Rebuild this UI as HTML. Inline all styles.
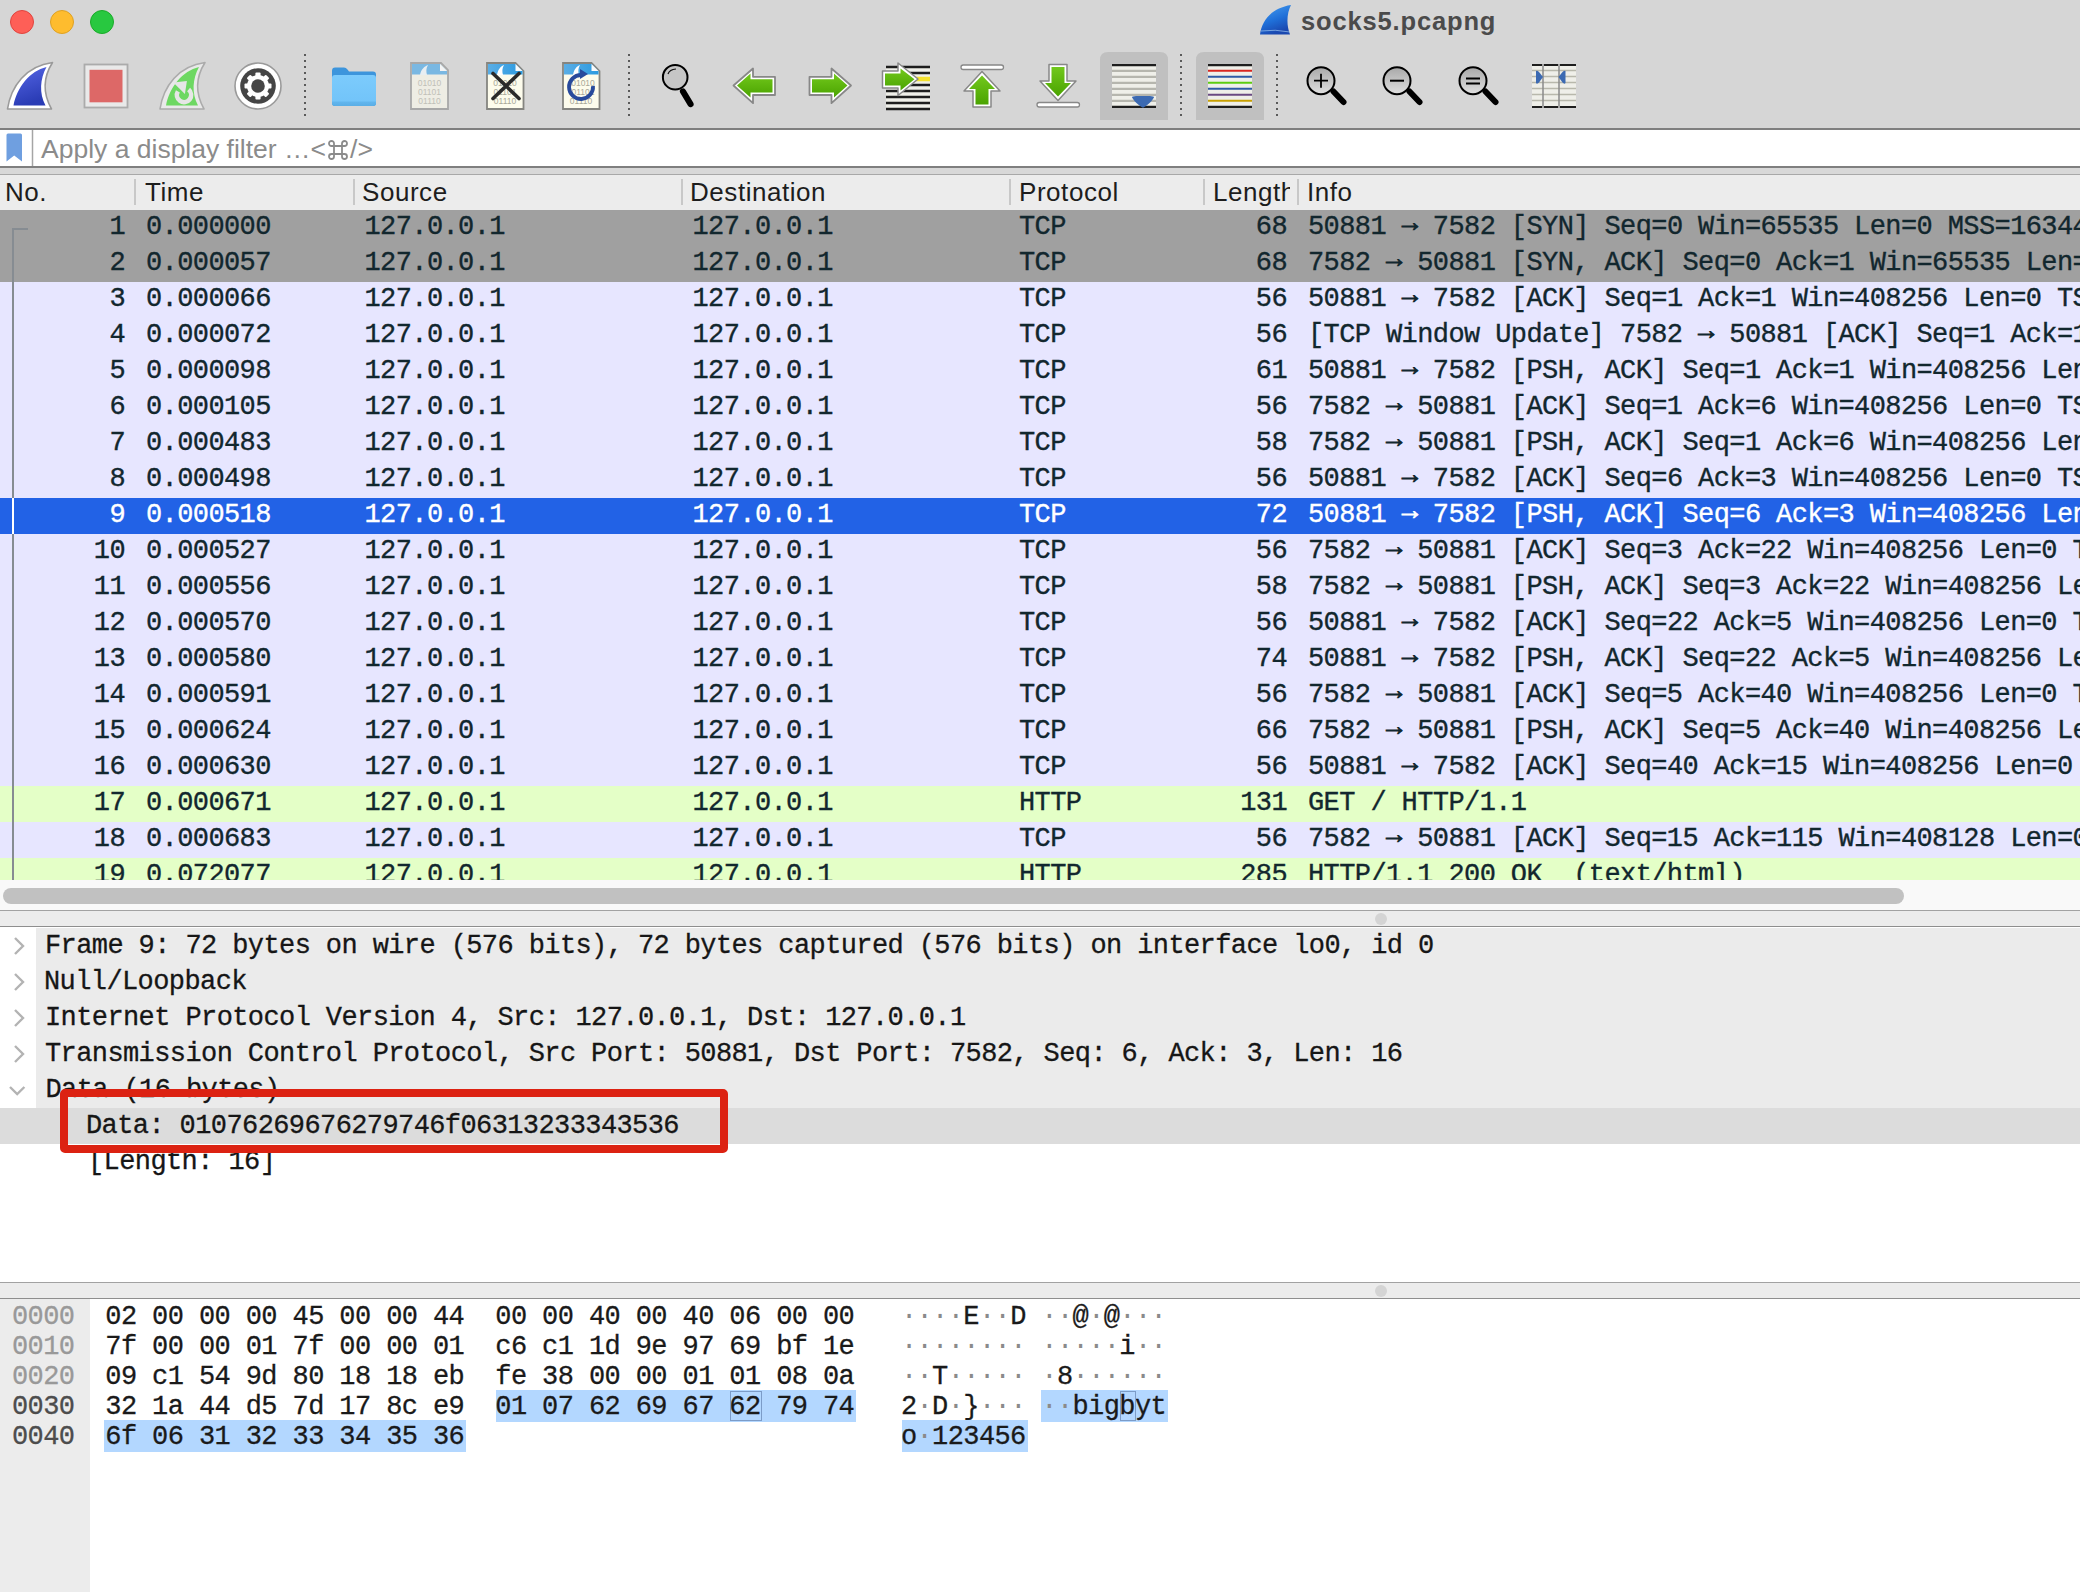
<!DOCTYPE html>
<html><head><meta charset="utf-8">
<style>
*{margin:0;padding:0;box-sizing:border-box}
html,body{width:2080px;height:1592px;overflow:hidden;background:#fff;font-family:"Liberation Sans",sans-serif}
.a{position:absolute}
#top{left:0;top:0;width:2080px;height:128px;background:#d6d6d6}
.tl{width:24px;height:24px;border-radius:50%;top:10px}
#title{left:1301px;top:6.7px;font:bold 25.5px "Liberation Sans",sans-serif;color:#4b4b4b;letter-spacing:0.85px}
.sep{width:3px;top:54px;height:62px;background-image:linear-gradient(#555 50%,transparent 50%);background-size:3px 6px;opacity:.75}
#filter{left:0;top:128px;width:2080px;height:40px;background:#fff;border-top:2px solid #7f7f7f;border-bottom:2px solid #7f7f7f}
#ftext{left:41px;top:134px;font-size:26.5px;color:#8b8b8b;white-space:pre}
#band1{left:0;top:168px;width:2080px;height:7px;background:#d8d8d8;border-bottom:1px solid #a8a8a8}
#hdr{left:0;top:175px;width:2080px;height:35px;background:#ececec}
.hl{top:177px;font-size:26px;letter-spacing:0.55px;color:#1d1d1d;white-space:pre;overflow:hidden}
.hs{top:179px;width:2px;height:26px;background:#c8c8c8}
#list{left:0;top:210px;width:2080px;height:670px;overflow:hidden;background:#fff}
.r{position:absolute;left:0;width:2080px;height:36px;color:#12272e;font-family:"Liberation Mono",monospace;font-size:27px;letter-spacing:-0.6px;white-space:pre;-webkit-text-stroke:0.35px currentColor}
.r span{position:absolute;top:2px}
.ar{font-style:normal;position:relative;top:-2.8px;-webkit-text-stroke:0.9px currentColor}
.syn{background:#a0a0a0}.tcp{background:#e7e6ff}.hgr{background:#e4ffc7}.sel{background:#2262e6;color:#fff}

#sb{left:0;top:880px;width:2080px;height:30px;background:#f9f9f9}
#thumb{left:3px;top:888px;width:1901px;height:16px;border-radius:8px;background:#c1c1c1}
.split{left:0;width:2080px;height:17px;background:#ececec;border-top:1px solid #a2a2a2;border-bottom:1px solid #8e8e8e}
.dot{width:12px;height:12px;border-radius:50%;background:#d4d4d4}
#det{left:0;top:928px;width:2080px;height:354px;background:#fff;overflow:hidden}
.d{position:absolute;left:0;width:2080px;height:36px;color:#161616;font-family:"Liberation Mono",monospace;font-size:27px;letter-spacing:-0.6px;white-space:pre;-webkit-text-stroke:0.3px currentColor}
.d span{position:absolute;top:3px}
.dg{background:#ebebeb}
.dg::before{content:"";position:absolute;left:0;top:0;width:36px;height:36px;background:#fff}
.dsel{background:#dcdcdc}
.chev{position:absolute;left:12px;top:8px}
#hex{left:0;top:1299px;width:2080px;height:293px;background:#fff}
#offc{left:0;top:1299px;width:90px;height:293px;background:#ececec}
.h{position:absolute;height:30px;font-family:"Liberation Mono",monospace;font-size:27px;letter-spacing:-0.6px;white-space:pre;color:#1a1a1a;-webkit-text-stroke:0.3px currentColor}
.hb{position:absolute;background:#b3d7ff;height:32px}
#redbox{left:60px;top:1089px;width:668px;height:64px;border:8px solid #dc2212;border-radius:5px}
</style></head><body>
<div class="a" id="top"></div>
<div class="a tl" style="left:10px;background:#fe5f57;border:1px solid #e0443e"></div>
<div class="a tl" style="left:50px;background:#febc2e;border:1px solid #dea123"></div>
<div class="a tl" style="left:90px;background:#28c840;border:1px solid #1aab29"></div>
<svg class="a" style="left:0;top:0" width="1600" height="128" viewBox="0 0 1600 128">
<defs>
<linearGradient id="gBlue" x1="0" y1="0" x2="0.3" y2="1"><stop offset="0" stop-color="#5566e6"/><stop offset="1" stop-color="#2a3cb5"/></linearGradient>
<linearGradient id="gGreen" x1="0" y1="0" x2="0" y2="1"><stop offset="0" stop-color="#72c81c"/><stop offset="1" stop-color="#4aa300"/></linearGradient>
<linearGradient id="gMag" x1="0" y1="0" x2="0" y2="1"><stop offset="0" stop-color="#a8a8a8"/><stop offset="1" stop-color="#e0e0e0"/></linearGradient>
<linearGradient id="gFolder" x1="0" y1="0" x2="0" y2="1"><stop offset="0" stop-color="#7ccbfc"/><stop offset="0.85" stop-color="#72c4f9"/><stop offset="0.86" stop-color="#62b6ee"/><stop offset="1" stop-color="#5aaee6"/></linearGradient>
<linearGradient id="gFileTop" x1="0" y1="0" x2="1" y2="0"><stop offset="0" stop-color="#5aaee6"/><stop offset="1" stop-color="#2b9ae0"/></linearGradient>
<g id="fin">
 <path d="M7.5,109 C11,86 26,66 52.5,62.5 C44,76 42,92 51.5,109 Z" fill="#fff" stroke="#9a9a9a" stroke-width="1.6" stroke-linejoin="round"/>
</g>
<g id="dots"><path d="M0,54 V117" stroke="#5a5a5a" stroke-width="2" stroke-dasharray="2 4"/></g>
<g id="lines">
 <rect x="0" y="0" width="44" height="44" fill="#efefe9"/>
</g>
</defs>
<!-- start capture fin -->
<use href="#fin"/>
<path d="M13.5,105.5 C17,87 30,71 46.5,67 C40,79 39,93 45.5,105.5 Z" fill="url(#gBlue)"/>
<!-- stop -->
<rect x="84.5" y="64.5" width="43" height="43" fill="#e9e9e9" stroke="#ababab" stroke-width="1.8"/>
<rect x="89.5" y="69.8" width="33" height="32.5" fill="#dd6867"/>
<!-- restart fin -->
<path d="M7.5,109 C11,86 26,66 52.5,62.5 C44,76 42,92 51.5,109 Z" transform="translate(152.5,0)" fill="#e9e9e9" stroke="#ababab" stroke-width="1.6" stroke-linejoin="round"/>
<path d="M13.5,105.5 C17,87 30,71 46.5,67 C40,79 39,93 45.5,105.5 Z" transform="translate(152.5,0)" fill="#6dd862"/>
<path d="M188.6,89.6 A7.1,7.1 0 1 1 177.9,91.4" fill="none" stroke="#e6e6e6" stroke-width="4.6"/>
<path d="M173.3,82.6 L186.9,81.1 L184.9,93.9 Z" fill="#e6e6e6"/>
<!-- options gear -->
<circle cx="258" cy="86" r="23" fill="#fff" stroke="#9a9a9a" stroke-width="1.6"/>
<circle cx="258" cy="86" r="17.8" fill="#454545"/>
<g fill="#fff" transform="translate(258,86)">
 <circle r="11"/>
 <g id="teeth"><rect x="-2.6" y="-13.5" width="5.2" height="5" rx="1"/></g>
 <use href="#teeth" transform="rotate(45)"/><use href="#teeth" transform="rotate(90)"/><use href="#teeth" transform="rotate(135)"/>
 <use href="#teeth" transform="rotate(180)"/><use href="#teeth" transform="rotate(225)"/><use href="#teeth" transform="rotate(270)"/><use href="#teeth" transform="rotate(315)"/>
 <circle r="6.8" fill="#454545"/>
</g>
<use href="#dots" transform="translate(305,0)"/>
<!-- folder -->
<path d="M332,71 Q332,67.6 335,67.6 L344,67.6 Q346,67.6 347.5,69.5 L349,71.5 L373,71.5 Q376,71.5 376,74.5 L376,103 Q376,106 373,106 L335,106 Q332,106 332,103 Z" fill="#3d95dc"/>
<path d="M332,78 Q332,75 335,75 L373,75 Q376,75 376,78 L376,103 Q376,106 373,106 L335,106 Q332,106 332,103 Z" fill="url(#gFolder)"/>
<!-- file icons -->
<g id="file1">
 <path d="M411,63 L441,63 L448,70 L448,109 L411,109 Z" fill="#eeede4" stroke="#a8a8a8" stroke-width="1.8"/>
 <path d="M412,64 L440,64 L447,71 L447,74.5 L412,74.5 Z" fill="#7ab8e2"/>
 <path d="M420,75 C421,69 425,66 428,65 C426,68 426,72 427,75 Z" fill="#e8eef2"/>
 <path d="M440,64 L440,71 L447,71 Z" fill="#f4f4f4"/>
 <text x="429.5" y="86" font-family="Liberation Sans" font-size="8.5" fill="#c0c0b8" text-anchor="middle">01010</text>
 <text x="429.5" y="95" font-family="Liberation Sans" font-size="8.5" fill="#c0c0b8" text-anchor="middle">01101</text>
 <text x="429.5" y="104" font-family="Liberation Sans" font-size="8.5" fill="#c0c0b8" text-anchor="middle">01110</text>
</g>
<g>
 <path d="M487,63 L515.5,63 L523.5,71 L523.5,109 L487,109 Z" fill="#fdfcec" stroke="#858580" stroke-width="1.8"/>
 <path d="M488,64 L515.5,64 L522.5,71 L522.5,74.5 L488,74.5 Z" fill="url(#gFileTop)"/>
 <path d="M497,75 C498,69 501,66 504,65 C502,68 502,72 503,75 Z" fill="#fff"/>
 <path d="M515.5,64 L515.5,71 L522.5,71 Z" fill="#fafafa"/>
 <text x="505" y="86" font-family="Liberation Sans" font-size="8.5" fill="#a8a898" text-anchor="middle">01010</text>
 <text x="505" y="95" font-family="Liberation Sans" font-size="8.5" fill="#a8a898" text-anchor="middle">01101</text>
 <text x="505" y="104" font-family="Liberation Sans" font-size="8.5" fill="#a8a898" text-anchor="middle">01110</text>
 <path d="M493,73.5 L519,98.5 M519,73.5 L493,98.5" stroke="#2a2a2a" stroke-width="3.6" stroke-linecap="round"/>
</g>
<g>
 <path d="M563,63 L591.5,63 L599.5,71 L599.5,109 L563,109 Z" fill="#fdfcec" stroke="#858580" stroke-width="1.8"/>
 <path d="M564,64 L591.5,64 L598.5,71 L598.5,74.5 L564,74.5 Z" fill="url(#gFileTop)"/>
 <path d="M573,75 C574,69 577,66 580,65 C578,68 578,72 579,75 Z" fill="#fff"/>
 <path d="M591.5,64 L591.5,71 L598.5,71 Z" fill="#fafafa"/>
 <text x="583" y="86" font-family="Liberation Sans" font-size="8.5" fill="#a8a898" text-anchor="middle">01010</text>
 <text x="583" y="95" font-family="Liberation Sans" font-size="8.5" fill="#a8a898" text-anchor="middle">01101</text>
 <text x="581" y="104" font-family="Liberation Sans" font-size="8.5" fill="#a8a898" text-anchor="middle">01110</text>
 <path d="M581,75 A12,12 0 1 0 593,86" fill="none" stroke="#284a9c" stroke-width="3.8"/>
 <path d="M580,69 L588,74 L580,79 Z" fill="#284a9c"/>
</g>
<use href="#dots" transform="translate(629,0)"/>
<!-- find -->
<circle cx="675.2" cy="77.2" r="12.3" fill="#c6c6c6" stroke="#000" stroke-width="2"/>
<path d="M668,74 Q669.5,69.5 676,69" fill="none" stroke="#111" stroke-width="1.2"/>
<path d="M683,91.5 L690.5,104" stroke="#000" stroke-width="6.2" stroke-linecap="round"/>
<!-- back / forward -->
<g id="arrowL">
 <path d="M733.5,85.5 L753,68.5 L753,76.8 L775,76.8 L775,95 L753,95 L753,103.2 Z" fill="#fff" stroke="#888" stroke-width="1.8" stroke-linejoin="round"/>
 <path d="M737,85.5 L750.5,73.5 L750.5,79.2 L772.5,79.2 L772.5,92.5 L750.5,92.5 L750.5,97.5 Z" fill="url(#gGreen)"/>
</g>
<use href="#arrowL" transform="translate(1584.5,0) scale(-1,1)"/>
<!-- goto -->
<rect x="886" y="66" width="44" height="44" fill="#efefe9"/>
<g stroke="#1e1e1e" stroke-width="2.3">
 <path d="M886,67 H930 M886,73 H930 M886,85 H930 M886,91 H930 M886,97 H930 M886,103 H930 M886,109 H930"/>
</g>
<path d="M886,79 H930" stroke="#f5e22e" stroke-width="4.6"/>
<path d="M882.5,71 L898,71 L898,63 L918,79 L898,95.5 L898,88 L882.5,88 Z" fill="#fff" stroke="#888" stroke-width="1.5" stroke-linejoin="round"/>
<path d="M885,73.5 L900.5,73.5 L900.5,68.5 L914.5,79.3 L900.5,90.5 L900.5,85.5 L885,85.5 Z" fill="url(#gGreen)"/>
<!-- first -->
<rect x="961" y="65" width="42.5" height="4.5" rx="2.2" fill="#fff" stroke="#888" stroke-width="1.3"/>
<path d="M982,71.5 L1000,91 L991,91 L991,107 L973,107 L973,91 L964,91 Z" fill="#fff" stroke="#888" stroke-width="1.5" stroke-linejoin="round"/>
<path d="M982,75.5 L995,89 L988.5,89 L988.5,104.5 L975.5,104.5 L975.5,89 L969,89 Z" fill="url(#gGreen)"/>
<!-- last -->
<rect x="1037" y="102.5" width="42.5" height="4.5" rx="2.2" fill="#fff" stroke="#888" stroke-width="1.3"/>
<path d="M1058,100.5 L1076,81 L1067,81 L1067,64.5 L1049,64.5 L1049,81 L1040,81 Z" fill="#fff" stroke="#888" stroke-width="1.5" stroke-linejoin="round"/>
<path d="M1058,96.5 L1071,83 L1064.5,83 L1064.5,67 L1051.5,67 L1051.5,83 L1045,83 Z" fill="url(#gGreen)"/>
<!-- autoscroll -->
<path d="M1100,60 Q1100,52 1108,52 L1160,52 Q1168,52 1168,60 L1168,120 L1100,120 Z" fill="#c0c0c0"/>
<rect x="1112" y="64" width="44" height="44" fill="#efefe9"/>
<path d="M1112,70.8 H1156 M1112,76.8 H1156 M1112,82.8 H1156 M1112,88.8 H1156 M1112,94.8 H1156 M1112,100.8 H1156" stroke="#b6b6ae" stroke-width="2.2"/>
<path d="M1112,65.2 H1156 M1112,106.8 H1156" stroke="#1e1e1e" stroke-width="2.2"/>
<path d="M1132,97.5 Q1132,96 1136,96 L1150,96 Q1154,96 1154,97.5 Q1150,104 1143,107.8 Q1136,104 1132,97.5 Z" fill="#3c6ab2"/>
<use href="#dots" transform="translate(1181,0)"/>
<!-- colorize -->
<path d="M1196,60 Q1196,52 1204,52 L1256,52 Q1264,52 1264,60 L1264,120 L1196,120 Z" fill="#c0c0c0"/>
<rect x="1208" y="64" width="44" height="44" fill="#efefe9"/>
<path d="M1208,65.2 H1252 M1208,106.8 H1252" stroke="#1e1e1e" stroke-width="2.2"/>
<path d="M1208,70.8 H1252" stroke="#d9251f" stroke-width="2"/>
<path d="M1208,76.8 H1252" stroke="#2e5aa6" stroke-width="2"/>
<path d="M1208,82.8 H1252" stroke="#5ccc10" stroke-width="2"/>
<path d="M1208,88.8 H1252" stroke="#2e5aa6" stroke-width="2"/>
<path d="M1208,94.8 H1252" stroke="#6a4a82" stroke-width="2"/>
<path d="M1208,100.8 H1252" stroke="#c8a000" stroke-width="2"/>
<use href="#dots" transform="translate(1277,0)"/>
<!-- zoom in/out/normal -->
<g id="mag">
 <circle cx="1321" cy="80.7" r="13.5" fill="url(#gMag)" stroke="#000" stroke-width="2"/>
 <path d="M1333.5,91.5 L1343.5,102" stroke="#000" stroke-width="6" stroke-linecap="round"/>
</g>
<path d="M1314,80.7 H1328 M1321,73.7 V87.7" stroke="#000" stroke-width="1.8"/>
<use href="#mag" transform="translate(76,0)"/>
<path d="M1390,80.7 H1404" stroke="#000" stroke-width="2"/>
<use href="#mag" transform="translate(152,0)"/>
<path d="M1466,78.5 H1480 M1466,83.5 H1480" stroke="#000" stroke-width="1.8"/>
<!-- resize columns -->
<rect x="1532" y="64" width="44" height="44" fill="#efefe9"/>
<path d="M1532,70.5 H1576 M1532,76.5 H1576 M1532,82.5 H1576 M1532,88.5 H1576 M1532,94.5 H1576 M1532,100.5 H1576" stroke="#b8b8ac" stroke-width="1.4"/>
<path d="M1532,65 H1542 M1544,65 H1558 M1560,65 H1576 M1532,107 H1542 M1544,107 H1558 M1560,107 H1576" stroke="#1e1e1e" stroke-width="2"/>
<path d="M1543,64 V108 M1559,64 V108" stroke="#8a8a8a" stroke-width="1.5"/>
<path d="M1536,71 Q1537,70 1539,72 L1543,77 L1539,82.5 Q1537,84.5 1536,83 Z" fill="#3c6ab2"/>
<path d="M1565.5,71 Q1564.5,70 1562.5,72 L1558.5,77 L1562.5,82.5 Q1564.5,84.5 1565.5,83 Z" fill="#3c6ab2"/>
</svg>

<div class="a" id="title">socks5.pcapng</div>

<div class="a" id="filter"></div>

<svg class="a" style="left:1255px;top:0" width="40" height="40" viewBox="1255 0 40 40">
<defs><linearGradient id="gT" x1="0" y1="0" x2="0.4" y2="1"><stop offset="0" stop-color="#4aa0f0"/><stop offset="0.6" stop-color="#1f6fd8"/><stop offset="1" stop-color="#1a48b0"/></linearGradient></defs>
<path d="M1260,34.5 C1262,20 1272,8 1291,5 C1287,13 1286,24 1290,34.5 Z" fill="url(#gT)"/>
<path d="M1261,31 Q1275,29 1290,32" stroke="#9cc4f0" stroke-width="1" fill="none" opacity=".7"/>
</svg>
<svg class="a" style="left:0;top:128px" width="40" height="40" viewBox="0 128 40 40">
<path d="M6.5,135 Q6.5,133.5 8,133.5 L20.5,133.5 Q22,133.5 22,135 L22,161.5 L14.2,155.5 L6.5,161.5 Z" fill="#6f9fe0"/>
<path d="M32.5,130 V166" stroke="#a5a5a5" stroke-width="1.5"/>
</svg>
<div class="a" id="ftext">Apply a display filter …&lt;<svg width="22" height="22" viewBox="0 0 22 22" style="vertical-align:-3px;margin:0 1px"><path d="M7,7 H15 V15 H7 Z M7,7 V4.5 A2.5,2.5 0 1 0 4.5,7 H7 M15,7 V4.5 A2.5,2.5 0 1 1 17.5,7 H15 M7,15 V17.5 A2.5,2.5 0 1 1 4.5,15 H7 M15,15 V17.5 A2.5,2.5 0 1 0 17.5,15 H15" fill="none" stroke="#8b8b8b" stroke-width="1.8"/></svg>/&gt;</div>
<div class="a" id="band1"></div>
<div class="a" id="hdr"></div>
<div class="a hl" style="left:5px">No.</div>
<div class="a hs" style="left:134px"></div>
<div class="a hl" style="left:145px">Time</div>
<div class="a hs" style="left:353px"></div>
<div class="a hl" style="left:362px">Source</div>
<div class="a hs" style="left:681px"></div>
<div class="a hl" style="left:690px">Destination</div>
<div class="a hs" style="left:1009px"></div>
<div class="a hl" style="left:1019px">Protocol</div>
<div class="a hs" style="left:1203px"></div>
<div class="a hl" style="left:1213px;width:77px">Length</div>
<div class="a hs" style="left:1297px"></div>
<div class="a hl" style="left:1307px">Info</div>

<div class="a" id="list">
<div class="r syn" style="top:0px"><span style="left:109.4px">1</span><span style="left:146px">0.000000</span><span style="left:364.5px">127.0.0.1</span><span style="left:692.5px">127.0.0.1</span><span style="left:1019px">TCP</span><span style="left:1255.8px">68</span><span style="left:1308px">50881 <i class=ar>→</i> 7582 [SYN] Seq=0 Win=65535 Len=0 MSS=16344 WS=64 TSval</span></div>
<div class="r syn" style="top:36px"><span style="left:109.4px">2</span><span style="left:146px">0.000057</span><span style="left:364.5px">127.0.0.1</span><span style="left:692.5px">127.0.0.1</span><span style="left:1019px">TCP</span><span style="left:1255.8px">68</span><span style="left:1308px">7582 <i class=ar>→</i> 50881 [SYN, ACK] Seq=0 Ack=1 Win=65535 Len=0 MSS=16344</span></div>
<div class="r tcp" style="top:72px"><span style="left:109.4px">3</span><span style="left:146px">0.000066</span><span style="left:364.5px">127.0.0.1</span><span style="left:692.5px">127.0.0.1</span><span style="left:1019px">TCP</span><span style="left:1255.8px">56</span><span style="left:1308px">50881 <i class=ar>→</i> 7582 [ACK] Seq=1 Ack=1 Win=408256 Len=0 TSval=1</span></div>
<div class="r tcp" style="top:108px"><span style="left:109.4px">4</span><span style="left:146px">0.000072</span><span style="left:364.5px">127.0.0.1</span><span style="left:692.5px">127.0.0.1</span><span style="left:1019px">TCP</span><span style="left:1255.8px">56</span><span style="left:1308px">[TCP Window Update] 7582 <i class=ar>→</i> 50881 [ACK] Seq=1 Ack=1 Win</span></div>
<div class="r tcp" style="top:144px"><span style="left:109.4px">5</span><span style="left:146px">0.000098</span><span style="left:364.5px">127.0.0.1</span><span style="left:692.5px">127.0.0.1</span><span style="left:1019px">TCP</span><span style="left:1255.8px">61</span><span style="left:1308px">50881 <i class=ar>→</i> 7582 [PSH, ACK] Seq=1 Ack=1 Win=408256 Len=5 TSval</span></div>
<div class="r tcp" style="top:180px"><span style="left:109.4px">6</span><span style="left:146px">0.000105</span><span style="left:364.5px">127.0.0.1</span><span style="left:692.5px">127.0.0.1</span><span style="left:1019px">TCP</span><span style="left:1255.8px">56</span><span style="left:1308px">7582 <i class=ar>→</i> 50881 [ACK] Seq=1 Ack=6 Win=408256 Len=0 TSval=1</span></div>
<div class="r tcp" style="top:216px"><span style="left:109.4px">7</span><span style="left:146px">0.000483</span><span style="left:364.5px">127.0.0.1</span><span style="left:692.5px">127.0.0.1</span><span style="left:1019px">TCP</span><span style="left:1255.8px">58</span><span style="left:1308px">7582 <i class=ar>→</i> 50881 [PSH, ACK] Seq=1 Ack=6 Win=408256 Len=2 TSval</span></div>
<div class="r tcp" style="top:252px"><span style="left:109.4px">8</span><span style="left:146px">0.000498</span><span style="left:364.5px">127.0.0.1</span><span style="left:692.5px">127.0.0.1</span><span style="left:1019px">TCP</span><span style="left:1255.8px">56</span><span style="left:1308px">50881 <i class=ar>→</i> 7582 [ACK] Seq=6 Ack=3 Win=408256 Len=0 TSval=1</span></div>
<div class="r sel" style="top:288px"><span style="left:109.4px">9</span><span style="left:146px">0.000518</span><span style="left:364.5px">127.0.0.1</span><span style="left:692.5px">127.0.0.1</span><span style="left:1019px">TCP</span><span style="left:1255.8px">72</span><span style="left:1308px">50881 <i class=ar>→</i> 7582 [PSH, ACK] Seq=6 Ack=3 Win=408256 Len=16 TSval</span></div>
<div class="r tcp" style="top:324px"><span style="left:93.8px">10</span><span style="left:146px">0.000527</span><span style="left:364.5px">127.0.0.1</span><span style="left:692.5px">127.0.0.1</span><span style="left:1019px">TCP</span><span style="left:1255.8px">56</span><span style="left:1308px">7582 <i class=ar>→</i> 50881 [ACK] Seq=3 Ack=22 Win=408256 Len=0 TSval=1</span></div>
<div class="r tcp" style="top:360px"><span style="left:93.8px">11</span><span style="left:146px">0.000556</span><span style="left:364.5px">127.0.0.1</span><span style="left:692.5px">127.0.0.1</span><span style="left:1019px">TCP</span><span style="left:1255.8px">58</span><span style="left:1308px">7582 <i class=ar>→</i> 50881 [PSH, ACK] Seq=3 Ack=22 Win=408256 Len=2 TSval</span></div>
<div class="r tcp" style="top:396px"><span style="left:93.8px">12</span><span style="left:146px">0.000570</span><span style="left:364.5px">127.0.0.1</span><span style="left:692.5px">127.0.0.1</span><span style="left:1019px">TCP</span><span style="left:1255.8px">56</span><span style="left:1308px">50881 <i class=ar>→</i> 7582 [ACK] Seq=22 Ack=5 Win=408256 Len=0 TSval=1</span></div>
<div class="r tcp" style="top:432px"><span style="left:93.8px">13</span><span style="left:146px">0.000580</span><span style="left:364.5px">127.0.0.1</span><span style="left:692.5px">127.0.0.1</span><span style="left:1019px">TCP</span><span style="left:1255.8px">74</span><span style="left:1308px">50881 <i class=ar>→</i> 7582 [PSH, ACK] Seq=22 Ack=5 Win=408256 Len=18 TSval</span></div>
<div class="r tcp" style="top:468px"><span style="left:93.8px">14</span><span style="left:146px">0.000591</span><span style="left:364.5px">127.0.0.1</span><span style="left:692.5px">127.0.0.1</span><span style="left:1019px">TCP</span><span style="left:1255.8px">56</span><span style="left:1308px">7582 <i class=ar>→</i> 50881 [ACK] Seq=5 Ack=40 Win=408256 Len=0 TSval=1</span></div>
<div class="r tcp" style="top:504px"><span style="left:93.8px">15</span><span style="left:146px">0.000624</span><span style="left:364.5px">127.0.0.1</span><span style="left:692.5px">127.0.0.1</span><span style="left:1019px">TCP</span><span style="left:1255.8px">66</span><span style="left:1308px">7582 <i class=ar>→</i> 50881 [PSH, ACK] Seq=5 Ack=40 Win=408256 Len=10 TSval</span></div>
<div class="r tcp" style="top:540px"><span style="left:93.8px">16</span><span style="left:146px">0.000630</span><span style="left:364.5px">127.0.0.1</span><span style="left:692.5px">127.0.0.1</span><span style="left:1019px">TCP</span><span style="left:1255.8px">56</span><span style="left:1308px">50881 <i class=ar>→</i> 7582 [ACK] Seq=40 Ack=15 Win=408256 Len=0 TSval=1</span></div>
<div class="r hgr" style="top:576px"><span style="left:93.8px">17</span><span style="left:146px">0.000671</span><span style="left:364.5px">127.0.0.1</span><span style="left:692.5px">127.0.0.1</span><span style="left:1019px">HTTP</span><span style="left:1240.2px">131</span><span style="left:1308px">GET / HTTP/1.1</span></div>
<div class="r tcp" style="top:612px"><span style="left:93.8px">18</span><span style="left:146px">0.000683</span><span style="left:364.5px">127.0.0.1</span><span style="left:692.5px">127.0.0.1</span><span style="left:1019px">TCP</span><span style="left:1255.8px">56</span><span style="left:1308px">7582 <i class=ar>→</i> 50881 [ACK] Seq=15 Ack=115 Win=408128 Len=0 TSval</span></div>
<div class="r hgr" style="top:648px"><span style="left:93.8px">19</span><span style="left:146px">0.072077</span><span style="left:364.5px">127.0.0.1</span><span style="left:692.5px">127.0.0.1</span><span style="left:1019px">HTTP</span><span style="left:1240.2px">285</span><span style="left:1308px">HTTP/1.1 200 OK  (text/html)</span></div>
</div>

<div class="a" style="left:12px;top:228px;width:2px;height:652px;background:#868c92"></div>
<div class="a" style="left:12px;top:228px;width:16px;height:2px;background:#868c92"></div>
<div class="a" style="left:12px;top:498px;width:2px;height:36px;background:#fff"></div>
<div class="a" id="sb"></div>
<div class="a" id="thumb"></div>
<div class="a split" style="top:910px"></div>
<div class="a dot" style="left:1375px;top:913px"></div>
<div class="a" id="det">
<div class="d dg" style="top:0px"><svg class="chev" width="14" height="20" viewBox="0 0 14 20"><path d="M3 2 L11 10 L3 18" fill="none" stroke="#b3b3b3" stroke-width="2.4"/></svg><span style="left:45px">Frame 9: 72 bytes on wire (576 bits), 72 bytes captured (576 bits) on interface lo0, id 0</span></div>
<div class="d dg" style="top:36px"><svg class="chev" width="14" height="20" viewBox="0 0 14 20"><path d="M3 2 L11 10 L3 18" fill="none" stroke="#b3b3b3" stroke-width="2.4"/></svg><span style="left:44px">Null/Loopback</span></div>
<div class="d dg" style="top:72px"><svg class="chev" width="14" height="20" viewBox="0 0 14 20"><path d="M3 2 L11 10 L3 18" fill="none" stroke="#b3b3b3" stroke-width="2.4"/></svg><span style="left:45px">Internet Protocol Version 4, Src: 127.0.0.1, Dst: 127.0.0.1</span></div>
<div class="d dg" style="top:108px"><svg class="chev" width="14" height="20" viewBox="0 0 14 20"><path d="M3 2 L11 10 L3 18" fill="none" stroke="#b3b3b3" stroke-width="2.4"/></svg><span style="left:45px">Transmission Control Protocol, Src Port: 50881, Dst Port: 7582, Seq: 6, Ack: 3, Len: 16</span></div>
<div class="d dg" style="top:144px"><svg class="chev" width="20" height="14" viewBox="0 0 20 14" style="left:8px;top:12px"><path d="M2 3 L9.2 10 L16.4 3" fill="none" stroke="#b3b3b3" stroke-width="2.4"/></svg><span style="left:45.5px">Data (16 bytes)</span></div>
<div class="d dsel" style="top:180px"><span style="left:86px">Data: 01076269676279746f06313233343536</span></div>
<div class="d " style="top:216px"><span style="left:88px">[Length: 16]</span></div>
</div>
<div class="a split" style="top:1282px"></div>
<div class="a dot" style="left:1375px;top:1285px"></div>
<div class="a" id="hex"></div>
<div class="a" id="offc"></div>
<div class="h" style="left:12px;top:1301.5px;color:#999">0000</div>
<div class="h" style="left:105.3px;top:1301.5px">02 00 00 00 45 00 00 44</div>
<div class="h" style="left:495.3px;top:1301.5px">00 00 40 00 40 06 00 00</div>
<div class="h" style="left:900.9px;top:1301.5px"><b style="font-weight:normal;color:#8a8a8a;-webkit-text-stroke:0">·</b><b style="font-weight:normal;color:#8a8a8a;-webkit-text-stroke:0">·</b><b style="font-weight:normal;color:#8a8a8a;-webkit-text-stroke:0">·</b><b style="font-weight:normal;color:#8a8a8a;-webkit-text-stroke:0">·</b>E<b style="font-weight:normal;color:#8a8a8a;-webkit-text-stroke:0">·</b><b style="font-weight:normal;color:#8a8a8a;-webkit-text-stroke:0">·</b>D</div>
<div class="h" style="left:1041.3px;top:1301.5px"><b style="font-weight:normal;color:#8a8a8a;-webkit-text-stroke:0">·</b><b style="font-weight:normal;color:#8a8a8a;-webkit-text-stroke:0">·</b>@<b style="font-weight:normal;color:#8a8a8a;-webkit-text-stroke:0">·</b>@<b style="font-weight:normal;color:#8a8a8a;-webkit-text-stroke:0">·</b><b style="font-weight:normal;color:#8a8a8a;-webkit-text-stroke:0">·</b><b style="font-weight:normal;color:#8a8a8a;-webkit-text-stroke:0">·</b></div>
<div class="h" style="left:12px;top:1331.5px;color:#999">0010</div>
<div class="h" style="left:105.3px;top:1331.5px">7f 00 00 01 7f 00 00 01</div>
<div class="h" style="left:495.3px;top:1331.5px">c6 c1 1d 9e 97 69 bf 1e</div>
<div class="h" style="left:900.9px;top:1331.5px"><b style="font-weight:normal;color:#8a8a8a;-webkit-text-stroke:0">·</b><b style="font-weight:normal;color:#8a8a8a;-webkit-text-stroke:0">·</b><b style="font-weight:normal;color:#8a8a8a;-webkit-text-stroke:0">·</b><b style="font-weight:normal;color:#8a8a8a;-webkit-text-stroke:0">·</b><b style="font-weight:normal;color:#8a8a8a;-webkit-text-stroke:0">·</b><b style="font-weight:normal;color:#8a8a8a;-webkit-text-stroke:0">·</b><b style="font-weight:normal;color:#8a8a8a;-webkit-text-stroke:0">·</b><b style="font-weight:normal;color:#8a8a8a;-webkit-text-stroke:0">·</b></div>
<div class="h" style="left:1041.3px;top:1331.5px"><b style="font-weight:normal;color:#8a8a8a;-webkit-text-stroke:0">·</b><b style="font-weight:normal;color:#8a8a8a;-webkit-text-stroke:0">·</b><b style="font-weight:normal;color:#8a8a8a;-webkit-text-stroke:0">·</b><b style="font-weight:normal;color:#8a8a8a;-webkit-text-stroke:0">·</b><b style="font-weight:normal;color:#8a8a8a;-webkit-text-stroke:0">·</b>i<b style="font-weight:normal;color:#8a8a8a;-webkit-text-stroke:0">·</b><b style="font-weight:normal;color:#8a8a8a;-webkit-text-stroke:0">·</b></div>
<div class="h" style="left:12px;top:1361.5px;color:#999">0020</div>
<div class="h" style="left:105.3px;top:1361.5px">09 c1 54 9d 80 18 18 eb</div>
<div class="h" style="left:495.3px;top:1361.5px">fe 38 00 00 01 01 08 0a</div>
<div class="h" style="left:900.9px;top:1361.5px"><b style="font-weight:normal;color:#8a8a8a;-webkit-text-stroke:0">·</b><b style="font-weight:normal;color:#8a8a8a;-webkit-text-stroke:0">·</b>T<b style="font-weight:normal;color:#8a8a8a;-webkit-text-stroke:0">·</b><b style="font-weight:normal;color:#8a8a8a;-webkit-text-stroke:0">·</b><b style="font-weight:normal;color:#8a8a8a;-webkit-text-stroke:0">·</b><b style="font-weight:normal;color:#8a8a8a;-webkit-text-stroke:0">·</b><b style="font-weight:normal;color:#8a8a8a;-webkit-text-stroke:0">·</b></div>
<div class="h" style="left:1041.3px;top:1361.5px"><b style="font-weight:normal;color:#8a8a8a;-webkit-text-stroke:0">·</b>8<b style="font-weight:normal;color:#8a8a8a;-webkit-text-stroke:0">·</b><b style="font-weight:normal;color:#8a8a8a;-webkit-text-stroke:0">·</b><b style="font-weight:normal;color:#8a8a8a;-webkit-text-stroke:0">·</b><b style="font-weight:normal;color:#8a8a8a;-webkit-text-stroke:0">·</b><b style="font-weight:normal;color:#8a8a8a;-webkit-text-stroke:0">·</b><b style="font-weight:normal;color:#8a8a8a;-webkit-text-stroke:0">·</b></div>
<div class="hb" style="left:496px;top:1390px;width:360px"></div>
<div class="hb" style="left:1041px;top:1390px;width:127px"></div>
<div class="h" style="left:12px;top:1391.5px;color:#4d4d4d">0030</div>
<div class="h" style="left:105.3px;top:1391.5px">32 1a 44 d5 7d 17 8c e9</div>
<div class="h" style="left:495.3px;top:1391.5px">01 07 62 69 67 62 79 74</div>
<div class="h" style="left:900.9px;top:1391.5px">2<b style="font-weight:normal;color:#8a8a8a;-webkit-text-stroke:0">·</b>D<b style="font-weight:normal;color:#8a8a8a;-webkit-text-stroke:0">·</b>}<b style="font-weight:normal;color:#8a8a8a;-webkit-text-stroke:0">·</b><b style="font-weight:normal;color:#8a8a8a;-webkit-text-stroke:0">·</b><b style="font-weight:normal;color:#8a8a8a;-webkit-text-stroke:0">·</b></div>
<div class="h" style="left:1041.3px;top:1391.5px"><b style="font-weight:normal;color:#8a8a8a;-webkit-text-stroke:0">·</b><b style="font-weight:normal;color:#8a8a8a;-webkit-text-stroke:0">·</b>bigbyt</div>
<div class="hb" style="left:104px;top:1420px;width:362px"></div>
<div class="hb" style="left:902px;top:1420px;width:126px"></div>
<div class="h" style="left:12px;top:1421.5px;color:#4d4d4d">0040</div>
<div class="h" style="left:105.3px;top:1421.5px">6f 06 31 32 33 34 35 36</div>
<div class="h" style="left:900.9px;top:1421.5px">o<b style="font-weight:normal;color:#8a8a8a;-webkit-text-stroke:0">·</b>123456</div>
<div class="a" style="left:730px;top:1391px;width:32px;height:30px;border:1px solid #7c9cc8"></div>
<div class="a" style="left:1120px;top:1391px;width:16px;height:30px;border:1px solid #7c9cc8"></div>
<div class="a" id="redbox"></div>
</body></html>
